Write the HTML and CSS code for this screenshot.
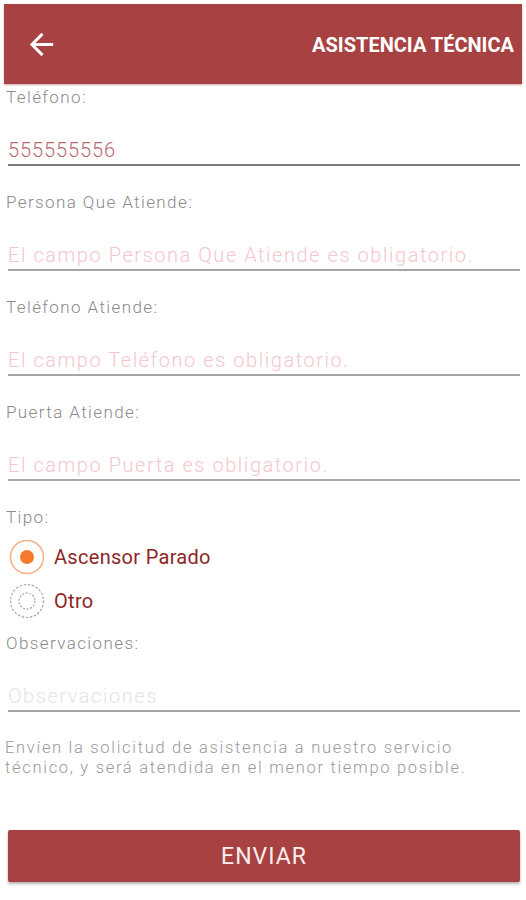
FILE: index.html
```html
<!DOCTYPE html>
<html lang="es">
<head>
<meta charset="utf-8">
<title>Asistencia Técnica</title>
<link rel="stylesheet" href="styles.css">
</head>
<body>
<header class="appbar">
  <svg class="back" viewBox="0 0 24 24" width="35" height="35"><path d="M20 11H7.83l5.59-5.59L12 4l-8 8 8 8 1.41-1.41L7.83 13H20v-2z" fill="#fff"/></svg>
  <h1 class="title">ASISTENCIA TÉCNICA</h1>
</header>
<main class="form">
  <div class="field">
    <div class="label">Teléfono:</div>
    <div class="input value">555555556</div>
  </div>
  <div class="field">
    <div class="label">Persona Que Atiende:</div>
    <div class="input error">El campo Persona Que Atiende es obligatorio.</div>
  </div>
  <div class="field">
    <div class="label">Teléfono Atiende:</div>
    <div class="input error">El campo Teléfono es obligatorio.</div>
  </div>
  <div class="field">
    <div class="label">Puerta Atiende:</div>
    <div class="input error">El campo Puerta es obligatorio.</div>
  </div>
  <div class="field">
    <div class="label">Tipo:</div>
    <div class="radios">
      <div class="radio">
        <svg width="36" height="36" viewBox="0 0 36 36"><circle cx="18" cy="18" r="16.5" fill="none" stroke="#f7ae86" stroke-width="1.5"/><circle cx="18" cy="18" r="7" fill="#f57a2c"/></svg>
        <span>Ascensor Parado</span>
      </div>
      <div class="radio">
        <svg width="36" height="36" viewBox="0 0 36 36"><circle cx="18" cy="18" r="16.5" fill="none" stroke="#a8a8a8" stroke-width="1.2" stroke-dasharray="2.5 1.6"/><circle cx="18" cy="18" r="8" fill="none" stroke="#a8a8a8" stroke-width="1.2" stroke-dasharray="2.2 1.4"/></svg>
        <span>Otro</span>
      </div>
    </div>
  </div>
  <div class="field">
    <div class="label">Observaciones:</div>
    <div class="input placeholder">Observaciones</div>
  </div>
  <p class="note">Envíen la solicitud de asistencia a nuestro servicio técnico, y será atendida en el menor tiempo posible.</p>
  <button class="submit">ENVIAR</button>
</main>
</body>
</html>
```
FILE: styles.css
```css
* { box-sizing: border-box; }
html, body { margin: 0; padding: 0; background: #fff; }
body { width: 526px; height: 900px; overflow: hidden; font-family: Roboto, "Liberation Sans", sans-serif; }

.appbar {
  margin: 4px 4px 0;
  height: 80px;
  background: #a84242;
  display: flex;
  align-items: center;
  justify-content: space-between;
  padding: 0 8px 0 20px;
  box-shadow: 0 1px 2px rgba(120,0,0,0.35);
}
.back { display: block; }
.title {
  margin: 0;
  color: #fff;
  font-size: 20px;
  font-weight: 700;
  letter-spacing: 0;
  padding-top: 2px;
}

.form { display: flex; flex-direction: column; }
.field { display: flex; flex-direction: column; }
.field + .field { margin-top: 23px; }

.label {
  height: 26px;
  line-height: 26px;
  padding-left: 6px;
  font-size: 17px;
  font-weight: 300;
  letter-spacing: 1.4px;
  color: #8a8a8a;
}

.input {
  margin: 0 6px 0 8px;
  height: 56px;
  padding-top: 26px;
  line-height: 28px;
  font-size: 20px;
  font-weight: 300;
  letter-spacing: 1.55px;
  border-bottom: 2px solid #a6a6a6;
  white-space: nowrap;
}
.value { color: #b86870; border-bottom-color: #7a7a7a; letter-spacing: 0.9px; }
.error { color: #f6c6cd; }
.placeholder { color: #e4e4e4; }

.radios { display: flex; flex-direction: column; margin-top: 5px; }
.radio {
  height: 44px;
  display: flex;
  align-items: center;
  gap: 9px;
  padding-left: 9px;
  font-size: 20px;
  font-weight: 400;
  letter-spacing: 0.3px;
  color: #8e2626;
}
.radio svg { display: block; }
.field:has(.radios) + .field { margin-top: 7px; }

.note {
  margin: 26px 0 0;
  padding-left: 5px;
  width: 500px;
  font-size: 16.5px;
  line-height: 20px;
  font-weight: 300;
  letter-spacing: 1.7px;
  color: #9a9a9a;
}

.submit {
  margin: 52px 6px 0 8px;
  height: 52px;
  border: none;
  border-radius: 2px;
  background: #a84242;
  color: #fbeeee;
  font-family: Roboto, "Liberation Sans", sans-serif;
  font-size: 23px;
  font-weight: 400;
  letter-spacing: 1px;
  box-shadow: 0 2px 3px rgba(0,0,0,0.3);
}
```
